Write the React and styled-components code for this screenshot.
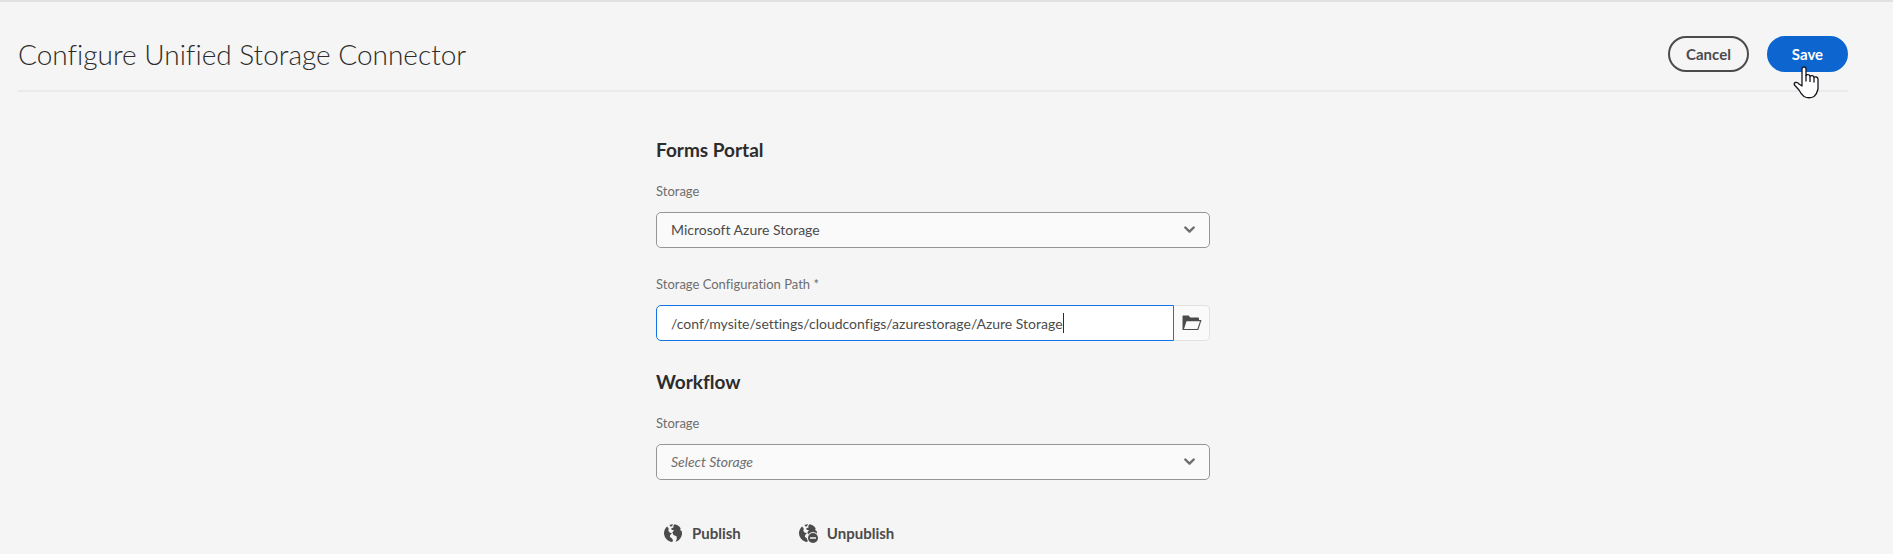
import React from "react";
import styled, { createGlobalStyle, css } from "styled-components";

const GlobalStyle = createGlobalStyle`
  *, *::before, *::after { box-sizing: border-box; }
  body {
    margin: 0;
    background: #f5f5f5;
    color: #4b4b4b;
    font-family: Lato, "Open Sans", sans-serif;
    font-size: 15px;
    line-height: 20px;
    font-variant-ligatures: none;
  }
  button, input, select { font: inherit; font-variant-ligatures: none; color: inherit; margin: 0; }
`;

const Page = styled.main`
  border-top: 2px solid #e1e1e1;
  padding: 0 45px 0 18px;
`;

const Header = styled.header`
  display: flex;
  align-items: center;
  justify-content: space-between;
  padding: 34px 0 18px;
  border-bottom: 2px solid #eaeaea;
`;

const Title = styled.h1`
  margin: 0;
  font-size: 28px;
  line-height: 36px;
  font-weight: 300;
  color: #2c2c2c;
`;

const Actions = styled.div`
  position: relative;
  display: flex;
  gap: 18px;
`;

const PillButton = styled.button`
  min-width: 81px;
  height: 36px;
  padding: 0 16px;
  border: 2px solid ${(p) => (p.$primary ? "#0d66d0" : "#4b4b4b")};
  border-radius: 18px;
  background: ${(p) => (p.$primary ? "#0d66d0" : "transparent")};
  color: ${(p) => (p.$primary ? "#fff" : "#4b4b4b")};
  font-weight: 700;
  cursor: pointer;
`;

const Pointer = styled.svg`
  position: absolute;
  right: 28px;
  top: 30px;
  pointer-events: none;
`;

const Form = styled.form`
  max-width: 554px;
  margin: 0 auto;
  padding-top: 47px;
`;

const Section = styled.section`
  margin-bottom: 30px;
`;

const SectionTitle = styled.h2`
  margin: 0 0 20px;
  font-size: 19px;
  line-height: 22px;
  font-weight: 700;
  color: #2c2c2c;
`;

const Field = styled.div`
  & + & { margin-top: 26px; }
`;

const Label = styled.label`
  display: block;
  margin-bottom: 11px;
  font-size: 13px;
  line-height: 20px;
  color: #6e6e6e;
`;

const Control = styled.div`
  position: relative;
  display: flex;
`;

const box = css`
  flex: 1;
  min-width: 0;
  height: 36px;
  padding: 0 14px;
  font-size: 14px;
`;

const Select = styled.select`
  ${box}
  appearance: none;
  border: 1px solid #959595;
  border-radius: 5px;
  background: #fafafa;
  font-style: ${(p) => (p.$empty ? "italic" : "normal")};
  color: ${(p) => (p.$empty ? "#6e6e6e" : "#4b4b4b")};
`;

const Chevron = styled.svg`
  position: absolute;
  right: 15px;
  top: 14px;
  pointer-events: none;
`;

const PathBox = styled.div`
  ${box}
  display: flex;
  align-items: center;
  border: 1px solid #1473e6;
  border-radius: 5px 0 0 5px;
  background: #fff;
`;

const PathInput = styled.input`
  field-sizing: content;
  min-width: 0;
  max-width: 100%;
  height: 34px;
  padding: 0;
  border: 0;
  outline: none;
  background: transparent;
  caret-color: transparent;
`;

const Caret = styled.span`
  width: 1px;
  height: 20px;
  background: #2c2c2c;
`;

const BrowseButton = styled.button`
  display: flex;
  align-items: center;
  justify-content: center;
  width: 36px;
  height: 36px;
  padding: 0;
  border: 1px solid #e1e1e1;
  border-left: 0;
  border-radius: 0 5px 5px 0;
  background: #fafafa;
`;

const QuickActions = styled.div`
  display: flex;
  gap: 42px;
  padding-top: 5px;
`;

const QuietButton = styled.button`
  display: flex;
  align-items: center;
  gap: 9px;
  height: 36px;
  padding: 0 8px;
  border: 0;
  background: transparent;
  font-weight: 700;
`;

function ChevronIcon() {
  return (
    <Chevron width="11" height="8" viewBox="0 0 11 8" aria-hidden="true">
      <path d="M1.3 1.5 5.5 5.7 9.7 1.5" fill="none" stroke="#6e6e6e" strokeWidth="2.4" strokeLinecap="round" strokeLinejoin="round" />
    </Chevron>
  );
}

function FolderIcon() {
  return (
    <svg width="20" height="16" viewBox="0 0 20 16" aria-hidden="true">
      <path d="M.5 15V1.3Q.5.5 1.3.5H6.6L8.3 2.5H16Q17 2.5 17 3.5V5H19.5L16.3 15ZM4.5 6.2 2 14H15.4L18 6.2Z" fill="#4b4b4b" fillRule="evenodd" />
    </svg>
  );
}

function GlobeIcon({ removed }) {
  return (
    <svg width="19" height="19" viewBox="0 0 19 19" aria-hidden="true">
      <g fill="#4b4b4b">
        <path d="M3.2 2.4C1.200 4 0 6.400 0 9C0 13.600 3.600 17.500 8.300 18L9 16.200 8 14.500 5.800 12.800 6.300 10.800 8 9.600 5.300 8.200 4.300 6.600 4.800 4.800Z" />
        <path d="M5.500 1 9 0 8 2.200 6.300 2.600Z" />
        <path d="M10.500.200C13 .600 15.300 2 16.600 4.200L16.200 6 17.800 7.300 18 9.400C17.800 13.300 15.200 16.700 11.500 17.700L12.800 15 12.500 12.300 9.500 11 8.300 8.500 10 6.300 7.600 5.800 7.300 4.300 9.500 3.600 9.300 1.800Z" />
      </g>
      {removed && (
        <>
          <circle cx="14" cy="14" r="6" fill="#f5f5f5" />
          <circle cx="14" cy="14" r="5" fill="#4b4b4b" />
          <path d="M11 14h6" stroke="#f5f5f5" strokeWidth="1.5" />
        </>
      )}
    </svg>
  );
}

function PointerIcon() {
  return (
    <Pointer width="27" height="33" viewBox="0 0 27 33" aria-hidden="true">
      <path d="M9 19V3Q9 1 11 1T13 3V9.500Q13 8.500 15 8.700T17 10.500Q17.500 9.300 19.200 9.600T21 11.500Q21.500 10.500 23.300 11T25 13.500V23Q24 28 21 30.500Q16 33 11 30.500Q8 28 6 24L1.500 19Q.5 17 2.500 16.500T6 18L9 20Z" fill="#fff" stroke="#15151f" strokeWidth="1.3" strokeLinejoin="round" />
      <path d="M13 9V15.500M17 10.500V16M21 11.500V16.500" stroke="#15151f" strokeWidth="1.3" />
    </Pointer>
  );
}

export default function App() {
  return (
    <>
      <GlobalStyle />
      <Page>
        <Header>
          <Title>Configure Unified Storage Connector</Title>
          <Actions>
            <PillButton type="button">Cancel</PillButton>
            <PillButton type="submit" form="connector" $primary>Save</PillButton>
            <PointerIcon />
          </Actions>
        </Header>
        <Form id="connector" onSubmit={(e) => e.preventDefault()}>
          <Section>
            <SectionTitle>Forms Portal</SectionTitle>
            <Field>
              <Label htmlFor="portal-storage">Storage</Label>
              <Control>
                <Select id="portal-storage" defaultValue="azure">
                  <option value="azure">Microsoft Azure Storage</option>
                </Select>
                <ChevronIcon />
              </Control>
            </Field>
            <Field>
              <Label htmlFor="portal-path">Storage Configuration Path *</Label>
              <Control>
                <PathBox>
                  <PathInput id="portal-path" type="text" required defaultValue="/conf/mysite/settings/cloudconfigs/azurestorage/Azure Storage" />
                  <Caret />
                </PathBox>
                <BrowseButton type="button" aria-label="Browse"><FolderIcon /></BrowseButton>
              </Control>
            </Field>
          </Section>
          <Section>
            <SectionTitle>Workflow</SectionTitle>
            <Field>
              <Label htmlFor="workflow-storage">Storage</Label>
              <Control>
                <Select id="workflow-storage" defaultValue="" $empty>
                  <option value="">Select Storage</option>
                </Select>
                <ChevronIcon />
              </Control>
            </Field>
          </Section>
          <QuickActions>
            <QuietButton type="button"><GlobeIcon />Publish</QuietButton>
            <QuietButton type="button"><GlobeIcon removed />Unpublish</QuietButton>
          </QuickActions>
        </Form>
      </Page>
    </>
  );
}
